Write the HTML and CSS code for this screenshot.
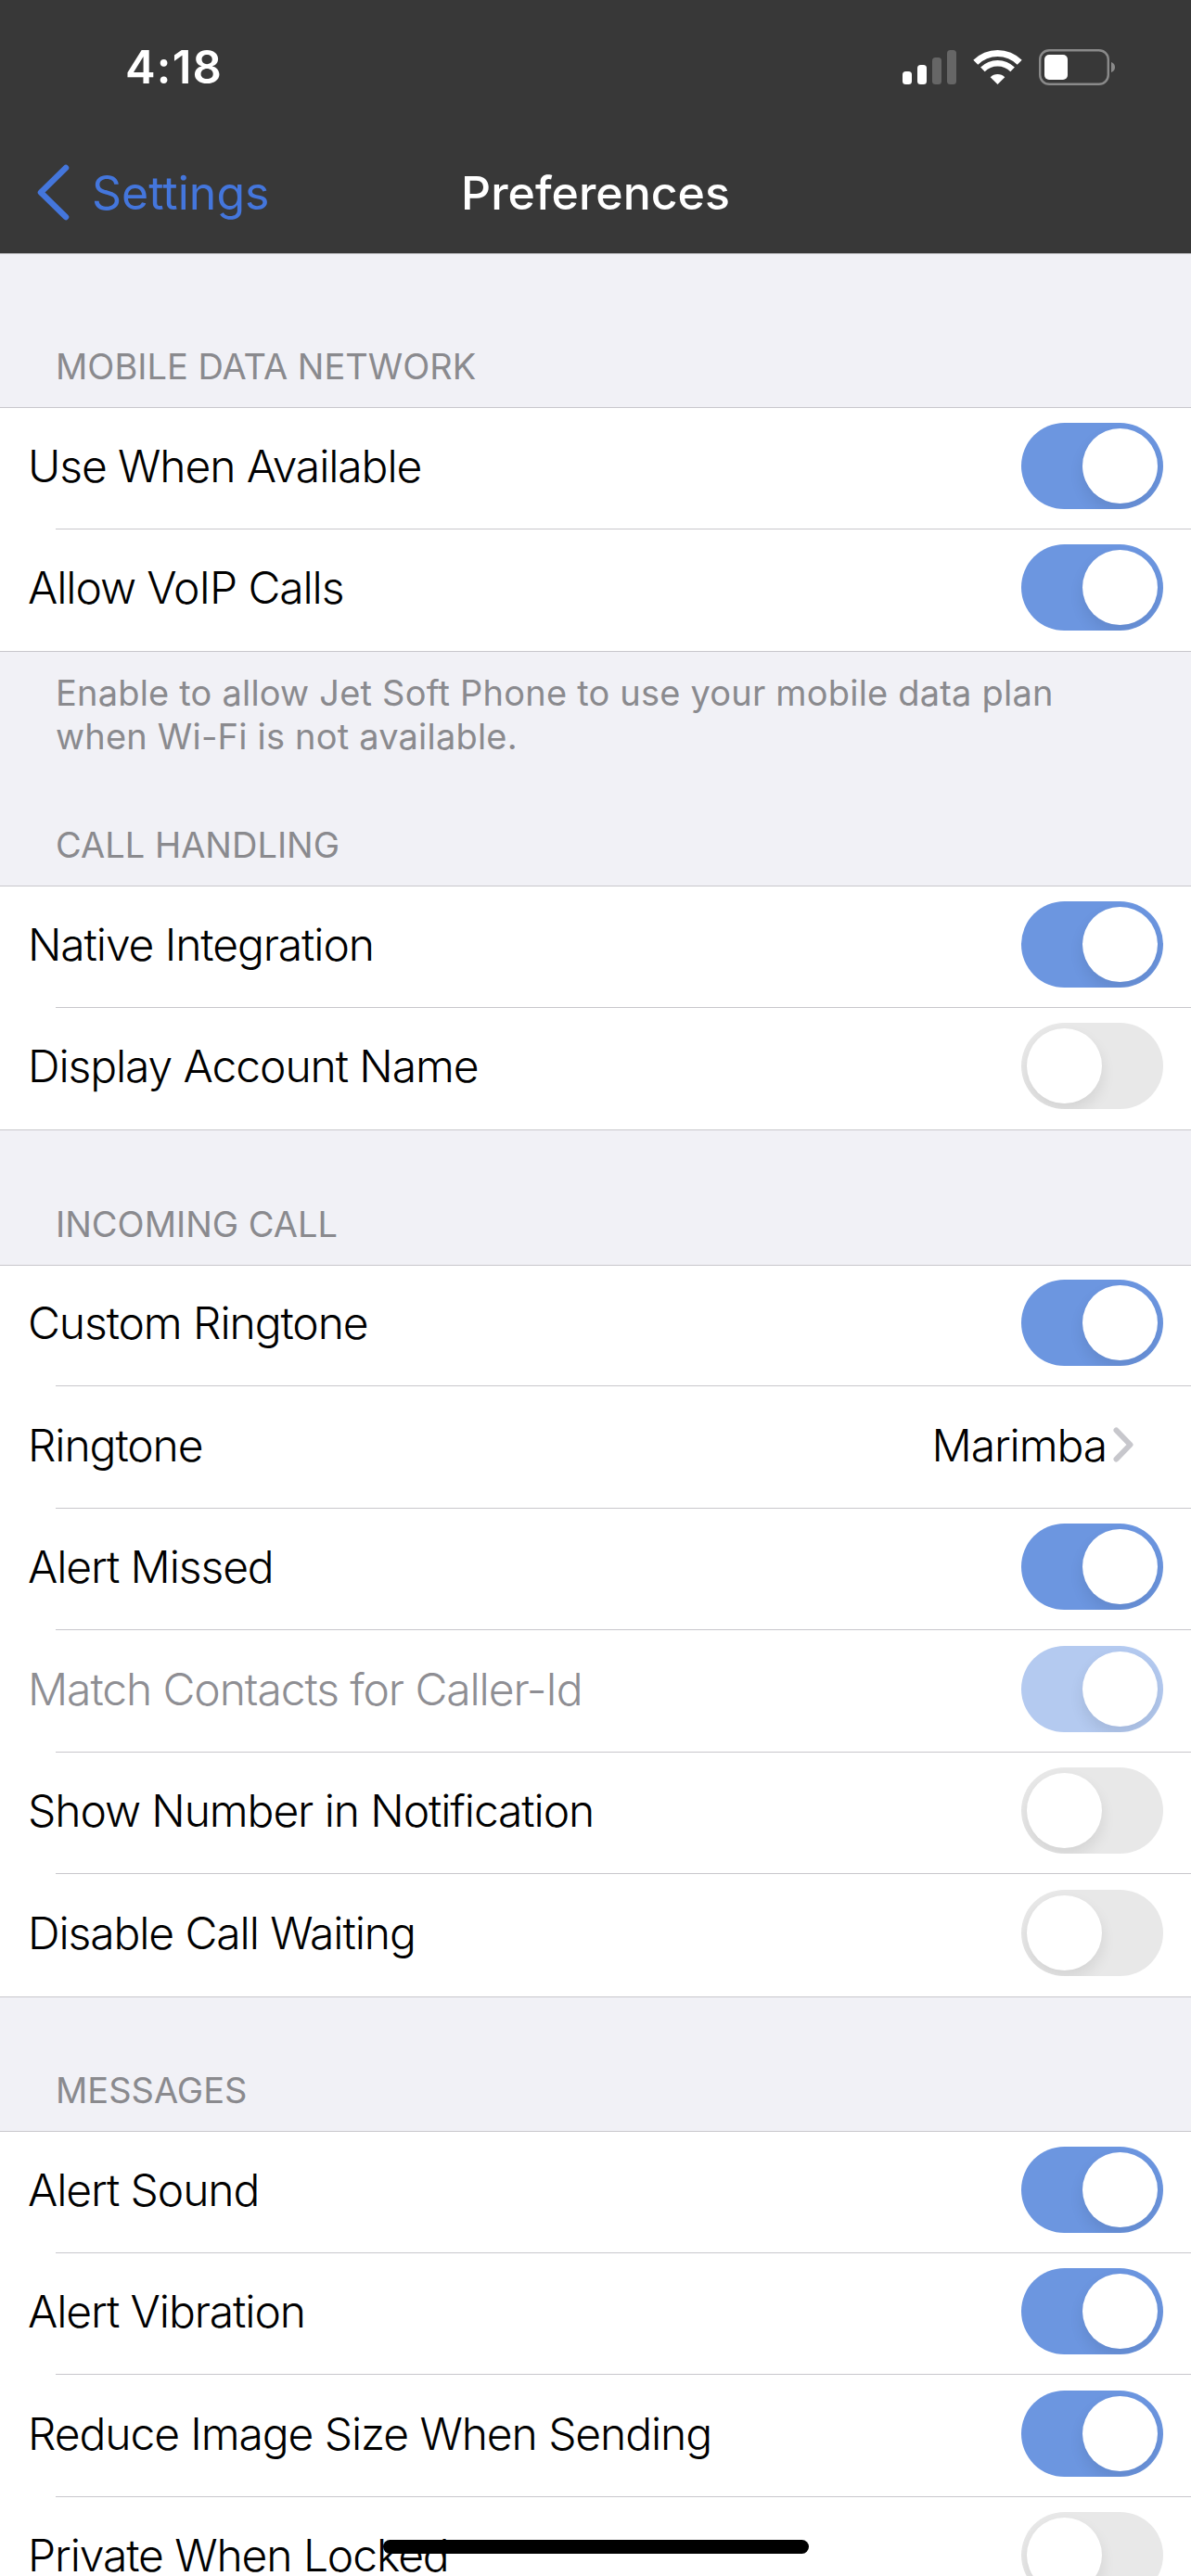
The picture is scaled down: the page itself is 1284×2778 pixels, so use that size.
FILE: index.html
```html
<!DOCTYPE html>
<html lang="en">
<head>
  <meta charset="UTF-8">
  <meta name="viewport" content="width=device-width, initial-scale=1.0">
  <title>Preferences</title>
  <link rel="stylesheet" href="styles.css">
</head>
<body>
  <header class="top">
    <div class="status">
      <span class="time">4:18</span>
      <svg class="status-icons" width="230" height="40" viewBox="0 0 230 40">
        <rect x="0" y="24" width="10" height="14" rx="3.5" fill="#fff"/>
        <rect x="16" y="17" width="10" height="21" rx="3.5" fill="#fff"/>
        <rect x="32" y="9" width="10" height="29" rx="3.5" fill="#666"/>
        <rect x="48" y="1" width="10" height="37" rx="3.5" fill="#666"/>
        <path d="M76.3 11.8A37 37 0 0 1 128.7 11.8L123.7 16.8A30 30 0 0 0 81.3 16.8Z" fill="#fff"/>
        <path d="M84.1 19.6A26 26 0 0 1 120.9 19.6L116.3 24.2A19.5 19.5 0 0 0 88.7 24.2Z" fill="#fff"/>
        <path d="M102.5 38L94.7 30.2A11 11 0 0 1 110.3 30.2Z" fill="#fff"/>
        <rect x="148.2" y="1.2" width="73.6" height="36.6" rx="10" fill="none" stroke="#8a8a8a" stroke-width="2.4"/>
        <rect x="153" y="6" width="25" height="27" rx="5" fill="#fff"/>
        <path d="M225 14C228 15 229 17 229 19.5C229 22 228 24 225 25Z" fill="#8a8a8a"/>
      </svg>
    </div>
    <nav class="nav">
      <a class="back">
        <svg width="37" height="61" viewBox="0 0 37 61">
          <path d="M33 4L6 30.5L33 57" fill="none" stroke="#4476dc" stroke-width="6.5" stroke-linecap="round" stroke-linejoin="round"/>
        </svg>
        <span>Settings</span>
      </a>
      <h1>Preferences</h1>
    </nav>
  </header>

  <main>
    <h2 class="sec-title first">MOBILE DATA NETWORK</h2>
    <section class="group">
      <div class="row"><span class="label">Use When Available</span><span class="toggle on"><i></i></span></div>
      <div class="row"><span class="label">Allow VoIP Calls</span><span class="toggle on"><i></i></span></div>
    </section>
    <p class="sec-note">Enable to allow Jet Soft Phone to use your mobile data plan when Wi-Fi is not available.</p>

    <h2 class="sec-title after-note">CALL HANDLING</h2>
    <section class="group">
      <div class="row"><span class="label">Native Integration</span><span class="toggle on"><i></i></span></div>
      <div class="row"><span class="label">Display Account Name</span><span class="toggle"><i></i></span></div>
    </section>

    <h2 class="sec-title">INCOMING CALL</h2>
    <section class="group">
      <div class="row"><span class="label">Custom Ringtone</span><span class="toggle on"><i></i></span></div>
      <div class="row">
        <span class="label">Ringtone</span>
        <span class="value">Marimba
          <svg width="22" height="38" viewBox="0 0 22 38">
            <path d="M3.5 3.5L18.5 19L3.5 34.5" fill="none" stroke="#c7c7cc" stroke-width="6" stroke-linecap="round" stroke-linejoin="round"/>
          </svg>
        </span>
      </div>
      <div class="row"><span class="label">Alert Missed</span><span class="toggle on"><i></i></span></div>
      <div class="row disabled"><span class="label">Match Contacts for Caller-Id</span><span class="toggle on"><i></i></span></div>
      <div class="row"><span class="label">Show Number in Notification</span><span class="toggle"><i></i></span></div>
      <div class="row"><span class="label">Disable Call Waiting</span><span class="toggle"><i></i></span></div>
    </section>

    <h2 class="sec-title">MESSAGES</h2>
    <section class="group">
      <div class="row"><span class="label">Alert Sound</span><span class="toggle on"><i></i></span></div>
      <div class="row"><span class="label">Alert Vibration</span><span class="toggle on"><i></i></span></div>
      <div class="row"><span class="label">Reduce Image Size When Sending</span><span class="toggle on"><i></i></span></div>
      <div class="row"><span class="label">Private When Locked</span><span class="toggle"><i></i></span></div>
    </section>
  </main>

  <div class="home-bar"></div>
</body>
</html>
```

FILE: styles.css
```css
* {
  box-sizing: border-box;
}
html, body {
  height: 2778px;
  overflow: hidden;
}
body {
  margin: 0;
  position: relative;
  background: #f1f1f6;
  font-family: Inter, 'Noto Sans', sans-serif;
  color: #000;
}
.top {
  height: 274px;
  background: #383838;
  border-bottom: 1px solid #b9b9bc;
  color: #fff;
}
.status {
  height: 144px;
  padding: 53px 81px 0 135px;
  display: flex;
  justify-content: space-between;
  align-items: flex-start;
}
.time {
  font-size: 49px;
  font-weight: 600;
  line-height: 40px;
  letter-spacing: 1.2px;
}
.nav {
  display: grid;
  grid-template-columns: 1fr auto 1fr;
  align-items: center;
  padding-top: 32px;
}
.back {
  display: flex;
  align-items: center;
  gap: 24px;
  margin-left: 38px;
  color: #4476dc;
  font-size: 50px;
  font-weight: 400;
}
.nav h1 {
  margin: 2px 0 0;
  font-size: 50px;
  font-weight: 500;
  line-height: 61px;
}
.sec-title {
  margin: 0;
  height: 144.5px;
  padding: 0 60px 21px;
  display: flex;
  align-items: flex-end;
  font-size: 38px;
  font-weight: 400;
  line-height: 46px;
  color: #8a8a8e;
}
.sec-title.first {
  height: 165px;
}
.sec-title.after-note {
  height: 137px;
}
.group {
  background: #fff;
  border-top: 1px solid #c8c7cc;
  border-bottom: 1px solid #c8c7cc;
}
.row {
  position: relative;
  height: 131.5px;
  padding: 0 30px 5px 30px;
  display: flex;
  align-items: center;
  justify-content: space-between;
  font-size: 48px;
  font-weight: 300;
  letter-spacing: -1.1px;
}
.row:first-child {
  margin-top: -1px;
}
.row + .row::before {
  content: "";
  position: absolute;
  top: -1px;
  left: 60px;
  right: 0;
  height: 1px;
  background: #c8c7cc;
}
.row.disabled {
  color: #8e8e93;
}
.value {
  display: flex;
  align-items: center;
  gap: 7px;
  margin-right: 32px;
}
.toggle {
  width: 153px;
  height: 93px;
  padding: 6px;
  border-radius: 47px;
  background: #e8e8e8;
  overflow: hidden;
  display: flex;
}
.toggle i {
  width: 81px;
  height: 81px;
  border-radius: 50%;
  background: #fff;
  box-shadow: 0 8px 16px rgba(0,0,0,0.09);
}
.toggle.on {
  background: #6c96e0;
  justify-content: flex-end;
}
.disabled .toggle.on {
  background: #b4caf0;
}
.sec-note {
  margin: 0;
  padding: 21px 60px 0;
  font-size: 38px;
  font-weight: 400;
  line-height: 47px;
  letter-spacing: 0.2px;
  color: #8a8a8e;
}
.home-bar {
  position: absolute;
  left: 413px;
  top: 2739px;
  width: 459px;
  height: 15px;
  border-radius: 8px;
  background: #000;
}
```
